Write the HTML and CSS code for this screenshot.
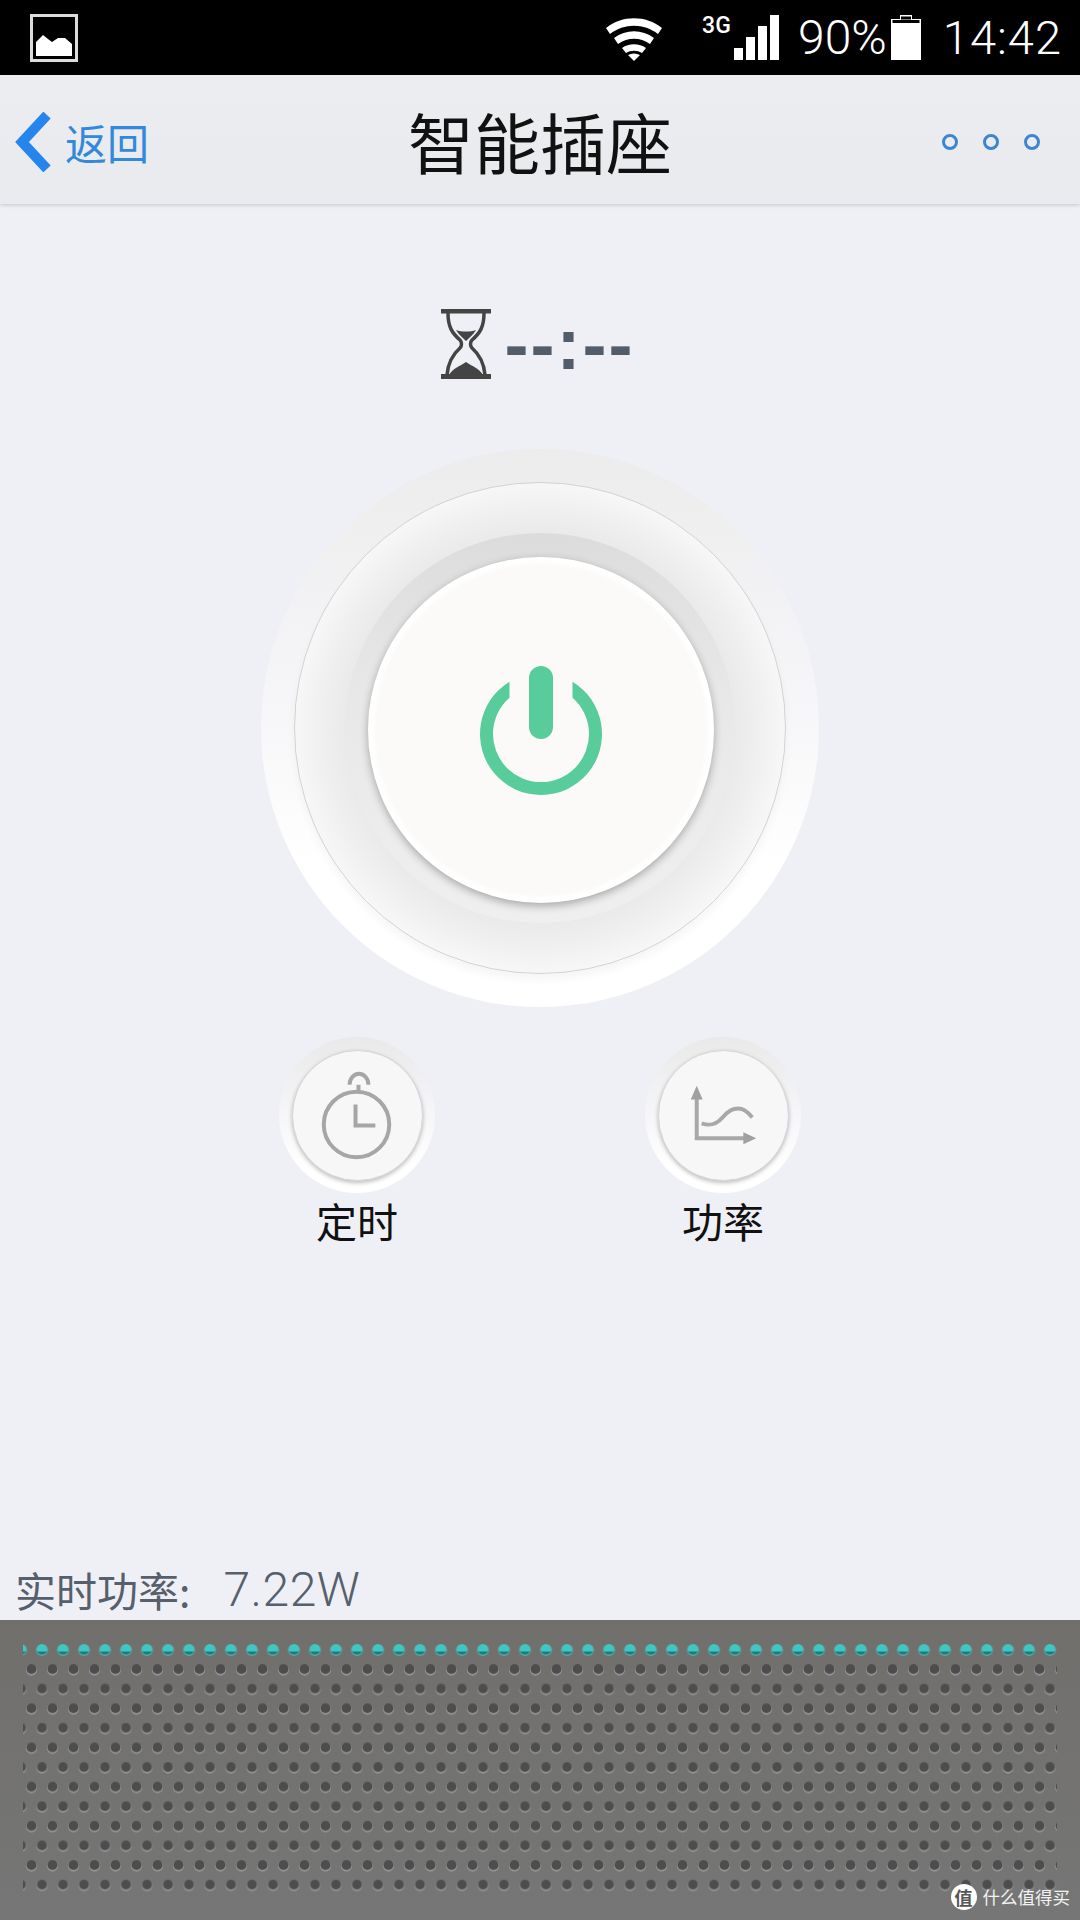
FILE: index.html
```html
<!DOCTYPE html>
<html lang="zh">
<head>
<meta charset="utf-8">
<title>智能插座</title>
<link rel="stylesheet" href="styles.css">
</head>
<body>
<div class="page">
  <header class="status">
    <svg class="st-pic" viewBox="0 0 48 48"><rect x="1.5" y="1.5" width="45" height="45" fill="none" stroke="#dcdcdc" stroke-width="3"/><path d="M6 42V28l7-7 5 4 4 3 6-4 7 0 7 6v12z" fill="#fff"/></svg>
    <svg class="st-wifi" viewBox="0 0 58 44"><path d="M1 11C17-2 41-2 57 11l-4 6C39 6 19 6 5 17z" fill="#fff"/><path d="M9 21c12-9 28-9 40 0l-4 6c-10-7-22-7-32 0z" fill="#fff"/><path d="M17 31c7-5 17-5 24 0l-4 5c-5-3-11-3-16 0z" fill="#fff"/><path d="M23 38c4-2 8-2 12 0l-6 6z" fill="#fff"/></svg>
    <span class="st-3g">3G</span>
    <svg class="st-signal" viewBox="0 0 45 45"><rect x="0" y="33" width="9" height="12"/><rect x="12" y="22" width="9" height="23"/><rect x="24" y="11" width="9" height="34"/><rect x="36" y="0" width="9" height="45"/></svg>
    <span class="st-pct">90%</span>
    <svg class="st-batt" viewBox="0 0 30 45"><path d="M9 0h12v4h9v41H0V4h9z" fill="#fff"/><rect x="1.500" y="5" width="27" height="3" fill="#000"/><rect x="10" y="1.500" width="10" height="3" fill="#000"/></svg>
    <span class="st-time">14:42</span>
  </header>

  <nav class="nav">
    <div class="nav-back">
      <svg class="chevron" viewBox="0 0 38 60"><path d="M32 3 7 30l25 27" fill="none" stroke="#2585ec" stroke-width="10"/></svg>
      <span class="back-text">返回</span>
    </div>
    <h1 class="nav-title">智能插座</h1>
    <div class="nav-more"><i class="ring"></i><i class="ring"></i><i class="ring"></i></div>
  </nav>

  <main class="main">
    <div class="timer">
      <svg class="hourglass" viewBox="0 0 50 70">
        <path d="M0 0h50v4.500H0zM0 65h50v5H0z" fill="#444"/>
        <path d="M7 4c0 14 4 20 12 27 2 2 2 6 0 8C11 46 7 54 6 66M43 4c0 14-4 20-12 27-2 2-2 6 0 8 8 7 12 15 13 27" fill="none" stroke="#444" stroke-width="3.500"/>
        <path d="M15 21c6 2 14 2 20 0-3 5-7 8-10 11-3-3-7-6-10-11z" fill="#444"/>
        <path d="M8 66c3-6 11-9 17-13 6 4 14 7 17 13z" fill="#444"/>
      </svg>
      <span class="timer-text">--:--</span>
    </div>

    <div class="dial">
      <div class="dial-ring">
        <div class="dial-well">
          <button class="dial-btn" type="button" aria-label="power">
            <svg class="power" viewBox="-62 -68 124 132">
              <path d="M-31.500-52.200A61 61 0 1 0 31.500-52.200V-36.200A48 48 0 1 1-31.500-36.200Z" fill="#58cc9a"/>
              <rect x="-12" y="-68" width="24" height="73" rx="12" fill="#58cc9a"/>
            </svg>
          </button>
        </div>
      </div>
    </div>

    <div class="actions">
      <div class="action">
        <div class="mini-outer"><div class="mini-btn">
          <svg class="mini-icon" viewBox="0 0 130 130" fill="none" stroke="#a6a6a6" stroke-width="4">
            <circle cx="64" cy="74" r="33"/>
            <path d="M63 54V75H83"/>
            <path d="M66 41V34M57 34A9.500 11 0 0 1 76 34"/>
          </svg>
        </div></div>
        <span class="action-label">定时</span>
      </div>
      <div class="action">
        <div class="mini-outer"><div class="mini-btn">
          <svg class="mini-icon" viewBox="0 0 130 130" fill="none" stroke="#a8a8a8" stroke-width="4">
            <path d="M38 46V88H88"/>
            <path d="M38 35l6 14H32zM98 88L85 94V82z" fill="#a0a0a0" stroke="none"/>
            <path d="M43 73C52 76 58 74 64 67S74 58 80 58 90 62 94 67"/>
          </svg>
        </div></div>
        <span class="action-label">功率</span>
      </div>
    </div>

    <p class="reading"><span class="reading-label">实时功率:</span><span class="reading-value">7.22W</span></p>
  </main>

  <footer class="panel">
    <svg class="grille" width="1080" height="300" viewBox="0 0 1080 300">
      <defs>
        <g id="hole">
          <circle cy="1" r="5.600" fill="#949494"/>
          <circle r="5" fill="#4d4d4d"/>
        </g>
        <pattern id="rowsA" patternUnits="userSpaceOnUse" x="10.500" y="0" width="21" height="39.200" patternTransform="translate(0 9.800)">
          <use href="#hole" x="10.500" y="19.600"/>
        </pattern>
        <pattern id="rowsB" patternUnits="userSpaceOnUse" x="0" y="0" width="21" height="39.200" patternTransform="translate(0 29.400)">
          <use href="#hole" x="10.500" y="19.600"/>
        </pattern>
        <pattern id="rowTeal" patternUnits="userSpaceOnUse" x="10.500" y="20" width="21" height="20">
          <circle cx="10.500" cy="10" r="6" fill="#5aa5a3"/>
          <circle cx="10.500" cy="9.500" r="5.200" fill="#3fc8c2"/>
          <path d="M5.500 11.500H15.500A5.600 5.600 0 0 1 5.500 11.500Z" fill="#1f7a7c"/>
        </pattern>
      </defs>
      <rect x="23" y="20" width="1034" height="20" fill="url(#rowTeal)"/>
      <rect x="23" y="60" width="1034" height="216" fill="url(#rowsA)"/>
      <rect x="23" y="40" width="1034" height="216" fill="url(#rowsB)"/>
    </svg>
    <div class="mark"><span class="mark-badge">值</span><span class="mark-text">什么值得买</span></div>
  </footer>
</div>
</body>
</html>
```
FILE: styles.css
```css
* { box-sizing: border-box; }
html, body { margin: 0; padding: 0; }
body { font-family: "Noto Sans CJK SC", "Noto Sans", sans-serif; background: #eff0f6; }
.page { width: 1080px; height: 1920px; display: flex; flex-direction: column; overflow: hidden; }

/* status bar */
.status { height: 75px; flex: none; background: #000; color: #fff; display: flex; align-items: center; padding: 0 18px 0 30px; font-family: Roboto, sans-serif; }
.st-pic { width: 48px; height: 48px; }
.st-wifi { width: 58px; height: 44px; margin: 2px 0 0 auto; }
.st-3g { font-size: 23px; font-weight: 500; width: 30px; margin-left: 39px; margin-bottom: 25px; }
.st-signal { width: 45px; height: 45px; margin-left: 2px; fill: #fff; }
.st-pct { font-size: 48px; font-weight: 300; margin-left: 19px; line-height: 75px; }
.st-batt { width: 30px; height: 45px; margin-left: 4px; }
.st-time { font-size: 47px; font-weight: 300; margin-left: 22px; line-height: 75px; letter-spacing: 1px; }

/* nav */
.nav { height: 129px; flex: none; display: grid; grid-template-columns: 1fr auto 1fr; align-items: center; background: linear-gradient(#ecedf0, #e9eaed); box-shadow: 0 1px 4px rgba(0,0,0,.18); position: relative; }
.nav-back { display: flex; align-items: center; gap: 12px; padding-left: 15px; }
.chevron { width: 38px; height: 60px; margin-top: 4px; }
.back-text { font-size: 42px; line-height: 60px; color: #3289dc; margin-top: 4px; }
.nav-title { margin: 0; font-size: 66px; font-weight: 400; line-height: 90px; color: #111; }
.nav-more { display: flex; justify-content: flex-end; gap: 25px; padding-right: 40px; margin-top: 4px; }
.ring { width: 16px; height: 16px; border: 3px solid #3d86cf; border-radius: 50%; }

/* main */
.main { flex: 1; display: flex; flex-direction: column; align-items: center; padding-top: 105px; }
.timer { display: flex; align-items: center; gap: 14px; height: 70px; margin-right: 5px; }
.hourglass { width: 50px; height: 70px; }
.timer-text { font-family: "Liberation Sans", sans-serif; font-weight: 700; font-size: 72px; letter-spacing: 2px; line-height: 70px; color: #535c69; }

.dial { width: 558px; height: 558px; margin-top: 70px; border-radius: 50%; background: linear-gradient(#ececed, #f6f6f8 45%, #fff 75%); display: flex; align-items: center; justify-content: center; }
.dial-ring { width: 492px; height: 492px; border-radius: 50%; border: 1px solid #d2d2d2; background: radial-gradient(circle closest-side, #e9e9ea 78%, #f0f0f1 90%, #f7f7f7 100%); display: flex; align-items: center; justify-content: center; box-shadow: 0 6px 8px rgba(0,0,0,.04); }
.dial-well { width: 390px; height: 390px; border-radius: 50%; background: linear-gradient(#dcdcdd, #e8e8e9 42%, #efeff0); display: flex; align-items: center; justify-content: center; }
.dial-btn { width: 346px; height: 346px; flex: none; margin: 3px 0 0 2px; padding: 0; border: 3px solid #fff; border-radius: 50%; background: #fbfaf8; box-shadow: 0 3px 8px rgba(0,0,0,.3), inset 0 0 4px 3px #fff; display: flex; align-items: center; justify-content: center; }
.power { width: 124px; height: 132px; margin-top: 4px; }

.actions { display: flex; gap: 210px; margin-top: 30px; }
.action { display: flex; flex-direction: column; align-items: center; gap: 3px; width: 156px; }
.mini-outer { width: 156px; height: 156px; border-radius: 50%; background: linear-gradient(#e9e9ea, #f6f6f8 50%, #fff 85%); display: flex; align-items: center; justify-content: center; }
.mini-btn { width: 131px; height: 131px; border-radius: 50%; background: #f7f7f8; border: 1px solid #d6d6d6; box-shadow: 0 2px 4px rgba(0,0,0,.25); }
.mini-icon { display: block; width: 129px; height: 129px; }
.action-label { font-size: 41px; line-height: 48px; color: #111; }

.reading { margin: auto 0 0; width: 100%; height: 58px; padding: 0 0 4px 15px; display: flex; align-items: center; color: #56606c; }
.reading-label { font-size: 41px; }
.reading-value { font-family: Roboto, sans-serif; font-weight: 300; font-size: 48px; margin-left: 33px; letter-spacing: .5px; }

/* bottom panel */
.panel { height: 300px; flex: none; background: linear-gradient(#706f6c, #767676); position: relative; }
.grille { display: block; }
.mark { position: absolute; right: 10px; bottom: 10px; display: flex; align-items: center; gap: 6px; color: #f2f2f2; }
.mark-badge { width: 26px; height: 26px; border-radius: 50%; background: #fff; color: #555; font-size: 18px; line-height: 26px; text-align: center; font-weight: 700; }
.mark-text { font-size: 17.5px; line-height: 26px; }
```
